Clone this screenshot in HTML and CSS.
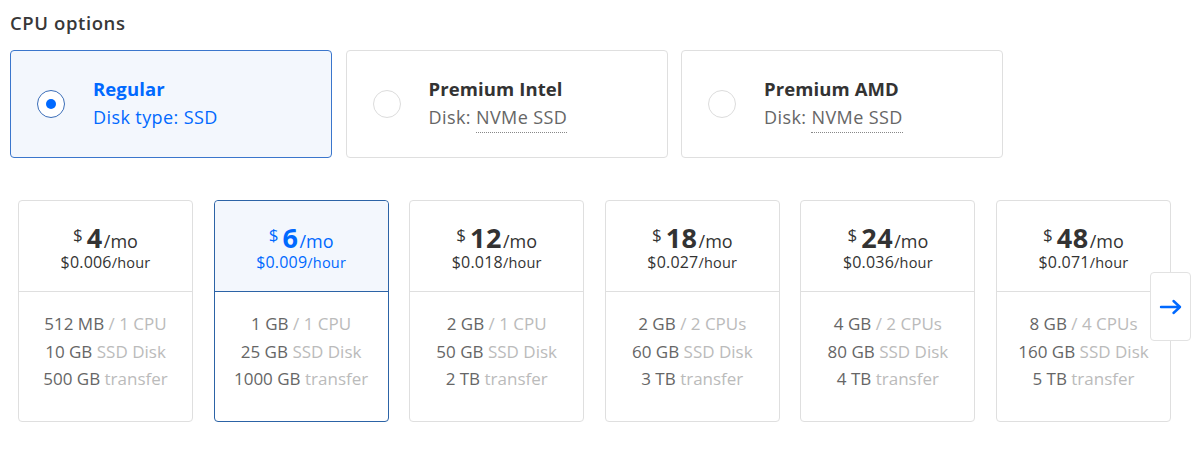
FILE: index.html
```html
<!DOCTYPE html>
<html lang="en">
<head>
<meta charset="utf-8">
<title>CPU options</title>
<link rel="stylesheet" href="styles.css">
</head>
<body>
<h2 class="title">CPU options</h2>
<div class="cpu-row">
  <div class="cpu-card selected">
    <span class="radio"><span class="dot"></span></span>
    <div class="cpu-text">
      <div class="cpu-name">Regular</div>
      <div class="cpu-disk">Disk type: SSD</div>
    </div>
  </div>
  <div class="cpu-card">
    <span class="radio"></span>
    <div class="cpu-text">
      <div class="cpu-name">Premium Intel</div>
      <div class="cpu-disk">Disk: <span class="dotted">NVMe SSD</span></div>
    </div>
  </div>
  <div class="cpu-card">
    <span class="radio"></span>
    <div class="cpu-text">
      <div class="cpu-name">Premium AMD</div>
      <div class="cpu-disk">Disk: <span class="dotted">NVMe SSD</span></div>
    </div>
  </div>
</div>

<div class="plans">
  <div class="plan">
    <div class="plan-head">
      <div class="price"><span class="cur">$</span><span class="amt">4</span><span class="per">/mo</span></div>
      <div class="hour">$0.006<span class="hr">/hour</span></div>
    </div>
    <div class="plan-body">
      <div>512 MB <span class="muted">/ 1 CPU</span></div>
      <div>10 GB <span class="muted">SSD Disk</span></div>
      <div>500 GB <span class="muted">transfer</span></div>
    </div>
  </div>
  <div class="plan selected">
    <div class="plan-head">
      <div class="price"><span class="cur">$</span><span class="amt">6</span><span class="per">/mo</span></div>
      <div class="hour">$0.009<span class="hr">/hour</span></div>
    </div>
    <div class="plan-body">
      <div>1 GB <span class="muted">/ 1 CPU</span></div>
      <div>25 GB <span class="muted">SSD Disk</span></div>
      <div>1000 GB <span class="muted">transfer</span></div>
    </div>
  </div>
  <div class="plan">
    <div class="plan-head">
      <div class="price"><span class="cur">$</span><span class="amt">12</span><span class="per">/mo</span></div>
      <div class="hour">$0.018<span class="hr">/hour</span></div>
    </div>
    <div class="plan-body">
      <div>2 GB <span class="muted">/ 1 CPU</span></div>
      <div>50 GB <span class="muted">SSD Disk</span></div>
      <div>2 TB <span class="muted">transfer</span></div>
    </div>
  </div>
  <div class="plan">
    <div class="plan-head">
      <div class="price"><span class="cur">$</span><span class="amt">18</span><span class="per">/mo</span></div>
      <div class="hour">$0.027<span class="hr">/hour</span></div>
    </div>
    <div class="plan-body">
      <div>2 GB <span class="muted">/ 2 CPUs</span></div>
      <div>60 GB <span class="muted">SSD Disk</span></div>
      <div>3 TB <span class="muted">transfer</span></div>
    </div>
  </div>
  <div class="plan">
    <div class="plan-head">
      <div class="price"><span class="cur">$</span><span class="amt">24</span><span class="per">/mo</span></div>
      <div class="hour">$0.036<span class="hr">/hour</span></div>
    </div>
    <div class="plan-body">
      <div>4 GB <span class="muted">/ 2 CPUs</span></div>
      <div>80 GB <span class="muted">SSD Disk</span></div>
      <div>4 TB <span class="muted">transfer</span></div>
    </div>
  </div>
  <div class="plan">
    <div class="plan-head">
      <div class="price"><span class="cur">$</span><span class="amt">48</span><span class="per">/mo</span></div>
      <div class="hour">$0.071<span class="hr">/hour</span></div>
    </div>
    <div class="plan-body">
      <div>8 GB <span class="muted">/ 4 CPUs</span></div>
      <div>160 GB <span class="muted">SSD Disk</span></div>
      <div>5 TB <span class="muted">transfer</span></div>
    </div>
  </div>
  <button class="next" aria-label="Next">
    <svg width="24" height="16" viewBox="0 0 24 16"><path d="M2 8H21M14.5 2L21 8L14.5 14" fill="none" stroke="#0069ff" stroke-width="2.4" stroke-linecap="round" stroke-linejoin="round"/></svg>
  </button>
</div>
</body>
</html>
```
FILE: styles.css
```css
* { box-sizing: border-box; }
html, body { background: #fff; }
body {
  margin: 0;
  padding: 10px;
  font-family: "Open Sans", Lato, "Liberation Sans", sans-serif;
  color: #333;
}
.title {
  margin: 0 0 14px 0;
  font-size: 18.5px;
  line-height: 26px;
  font-weight: 600;
  letter-spacing: 0.6px;
  color: #383838;
}
.cpu-row {
  display: flex;
  gap: 13.5px;
}
.cpu-card {
  width: 322px;
  height: 108px;
  border: 1px solid #dfdfdf;
  border-radius: 4px;
  display: flex;
  align-items: center;
  padding-left: 26px;
  gap: 28px;
  background: #fff;
}
.cpu-card.selected {
  background: #f3f7fd;
  border-color: #3a76cc;
}
.radio {
  width: 28px;
  height: 28px;
  border-radius: 50%;
  border: 1px solid #dcdcdc;
  display: flex;
  align-items: center;
  justify-content: center;
  flex: none;
  background: #fff;
}
.selected .radio { border-color: #3a6db8; }
.dot {
  width: 10px;
  height: 10px;
  border-radius: 50%;
  background: #0069ff;
}
.cpu-text {
  margin-bottom: 2px;
}
.cpu-name {
  font-size: 18.5px;
  font-weight: 700;
  line-height: 28.5px;
  letter-spacing: 0.1px;
  color: #333;
}
.cpu-disk {
  font-size: 18px;
  line-height: 28.5px;
  letter-spacing: 0.4px;
  color: #666;
}
.selected .cpu-name, .selected .cpu-disk { color: #0069ff; }
.dotted {
  border-bottom: 1px dotted #888;
  padding-bottom: 3px;
}
.plans {
  position: relative;
  margin: 42px 0 0 8px;
  display: grid;
  grid-template-columns: repeat(6, 175px);
  column-gap: 20.6px;
}
.plan {
  height: 222px;
  border: 1px solid #dfdfdf;
  border-radius: 4px;
  background: #fff;
  display: flex;
  flex-direction: column;
  text-align: center;
}
.plan-head {
  height: 91px;
  border-bottom: 1px solid #dfdfdf;
  padding-top: 22px;
  border-radius: 4px 4px 0 0;
}
.plan.selected { border-color: #2c63a6; }
.plan.selected .plan-head {
  background: #f3f7fd;
  border-bottom-color: #2c63a6;
  color: #0069ff;
}
.price {
  font-size: 27px;
  line-height: 29px;
  height: 29px;
  white-space: nowrap;
}
.cur {
  font-size: 17px;
  line-height: 1;
  vertical-align: 7px;
  margin-right: 4px;
}
.amt {
  font-weight: 700;
  margin-right: 1px;
  letter-spacing: 0.5px;
}
.per {
  font-size: 18px;
  line-height: 1;
}
.hour {
  font-size: 16px;
  line-height: 21px;
  letter-spacing: 0.2px;
}
.hr { font-size: 14.5px; }
.plan-body {
  padding-top: 18px;
  font-size: 17px;
  line-height: 27.5px;
  color: #666;
}
.muted { color: #bbb; }
.next {
  position: absolute;
  left: 1132px;
  top: 72px;
  width: 41px;
  height: 69px;
  border: 1px solid #e2e2e2;
  border-radius: 4px;
  background: #fff;
  padding: 0;
  display: flex;
  align-items: center;
  justify-content: center;
  cursor: pointer;
}
```
